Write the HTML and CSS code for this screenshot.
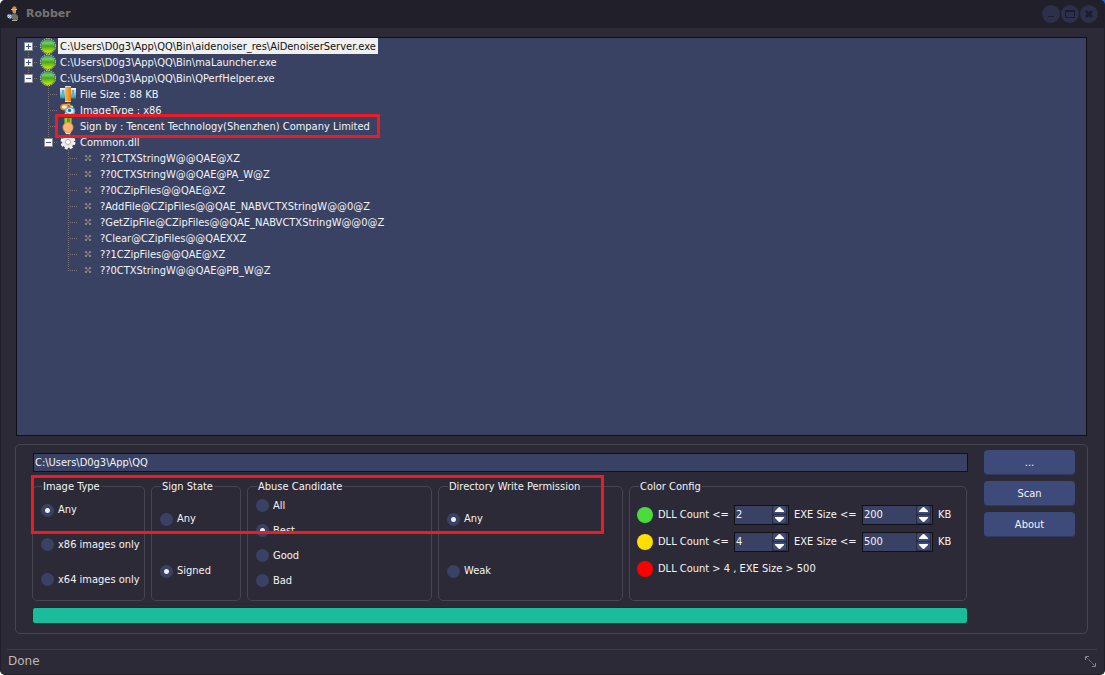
FILE: index.html
```html
<!DOCTYPE html>
<html lang="en">
<head>
<meta charset="utf-8">
<title>Robber</title>
<link rel="stylesheet" href="styles.css">
</head>
<body>
<svg class="defs" aria-hidden="true">
  <defs>
    <linearGradient id="ball" x1="0" y1="0" x2="0" y2="1"><stop offset="0" stop-color="#2f9a2a"/><stop offset=".3" stop-color="#7cc873"/><stop offset=".5" stop-color="#44a41c"/><stop offset="1" stop-color="#d8f000"/></linearGradient>
    <linearGradient id="steel" x1="0" y1="0" x2="0" y2="1"><stop offset="0" stop-color="#e9f7fa"/><stop offset=".5" stop-color="#8fc6d6"/><stop offset="1" stop-color="#2f7f96"/></linearGradient>
    <linearGradient id="orange" x1="0" y1="0" x2="1" y2="0"><stop offset="0" stop-color="#ffb649"/><stop offset="1" stop-color="#e87f0c"/></linearGradient>
    <symbol id="i-ball" viewBox="0 0 16 16"><circle cx="8" cy="8" r="7.500" fill="#1d4a22"/><circle cx="8" cy="8" r="7" fill="url(#ball)"/><circle cx="8" cy="8" r="7.600" fill="none" stroke="#fff" stroke-width=".8" stroke-dasharray="1.400 1"/></symbol>
    <symbol id="i-plus" viewBox="0 0 9 9"><path d="M.5.5h8v8h-8z" fill="#fbfbfb" stroke="#8d8d8d"/><path d="M2 4.500h5M4.500 2v5" stroke="#3b55a8"/></symbol>
    <symbol id="i-minus" viewBox="0 0 9 9"><path d="M.5.5h8v8h-8z" fill="#fbfbfb" stroke="#8d8d8d"/><path d="M2 4.500h5" stroke="#3b55a8"/></symbol>
    <symbol id="i-size" viewBox="0 0 16 16"><path d="M0 2h16v11H0z" fill="url(#steel)"/><path d="M0 2.500h16" stroke="#eefcff"/><path d="M0 12.500h16" stroke="#2d7184"/><path d="M2 4h2v7H2zM12 4h2v7h-2z" fill="#5fb0c6"/><path d="M5 1h6v14H5z" fill="url(#orange)"/><path d="M5 .5h6M5 15.500h6" stroke="#c5e5ec"/></symbol>
    <symbol id="i-type" viewBox="0 0 16 16"><ellipse cx="4.500" cy="5" rx="3.500" ry="2.500" fill="#fff1d8" stroke="#e98a20" stroke-width="1.700"/><path d="M5 3l4-1 2 3" fill="none" stroke="#f6a53b" stroke-width="1.500"/><ellipse cx="10" cy="9" rx="4.500" ry="3.500" fill="#e8f7fa" stroke="#63b1c9" stroke-width="1.700"/><circle cx="9.500" cy="8.500" r="1.700" fill="#286e91"/><path d="M11 4l2 1M5 11l2 2M13 12l2 1" stroke="#b7e1eb" stroke-width="1.500"/></symbol>
    <symbol id="i-medal" viewBox="0 0 16 16"><path d="M4 0h8v6H4z" fill="#5d9f18"/><path d="M5 0h2v5H5zM10 0h1v5h-1z" fill="#95cd49"/><path d="M4 12h8l-2 4H6z" fill="#fff0d6"/><circle cx="8" cy="9.500" r="5" fill="#ffb673" stroke="#ed9448"/></symbol>
    <symbol id="i-gear" viewBox="0 0 16 16"><circle cx="8" cy="8" r="6" fill="#e8e8e8"/><circle cx="8" cy="8" r="6.200" fill="none" stroke="#f5f5f5" stroke-width="2.500" stroke-dasharray="2.900 1.970"/><circle cx="8" cy="8" r="2.500" fill="#fff" stroke="#b2b2b2"/></symbol>
    <symbol id="i-fn" viewBox="0 0 8 8"><path d="M1 1h2v1h2V1h2v2H6v2h1v2H5V6H3v1H1V5h1V3H1z" fill="#85837a"/><path d="M3 2h2v1h1v2H5v1H3V5H2V3h1z" fill="#55555a"/><path d="M3 3h2v2H3z" fill="#6d6c69"/></symbol>
    <symbol id="i-up" viewBox="0 0 13 8"><path d="M6 1h1l4 4v1H2V5z" fill="#fff"/></symbol>
    <symbol id="i-down" viewBox="0 0 13 8"><path d="M2 2h9v1L7 7H6L2 3z" fill="#fff"/></symbol>
  </defs>
</svg>
<div class="window">
  <header class="titlebar">
    <svg class="app-icon" viewBox="0 0 16 16" aria-hidden="true"><path d="M6 2l2-2 2 1 1 3H6z" fill="#d98b25"/><path d="M5 3h6v1H5z" fill="#f5b24b"/><path d="M6 4h4v3H7z" fill="#b39a80"/><path d="M6 8l3-1 3 3v4l-3 1-3-2z" fill="#706e69"/><path d="M6 14h5v1H6z" fill="#aaa698"/><path d="M1 9l2-1 3 1v3l-2 1-3-2z" fill="#7f9dbd"/><path d="M2 9l3 3M5 9l-3 3" stroke="#c9dcec"/></svg>
    <h1 class="title">Robber</h1>
    <div class="controls">
      <button class="control" aria-label="Minimize"><svg viewBox="0 0 18 18"><path d="M6 11.500h6"/></svg></button>
      <button class="control" aria-label="Maximize"><svg viewBox="0 0 18 18"><path d="M4.500 5.500h9v7h-9zM4 6.500h10"/></svg></button>
      <button class="control" aria-label="Close"><svg viewBox="0 0 18 18"><path d="M6 6l6 6M12 6l-6 6" stroke-width="3"/></svg></button>
    </div>
  </header>

  <main class="content">
    <ul class="tree">
      <li class="node"><span class="cell line first"><svg class="toggle"><use href="#i-plus"/></svg></span><span class="cell"><svg class="icon"><use href="#i-ball"/></svg></span><span class="text selected">C:\Users\D0g3\App\QQ\Bin\aidenoiser_res\AiDenoiserServer.exe</span></li>
      <li class="node"><span class="cell line"><svg class="toggle"><use href="#i-plus"/></svg></span><span class="cell"><svg class="icon"><use href="#i-ball"/></svg></span><span class="text">C:\Users\D0g3\App\QQ\Bin\maLauncher.exe</span></li>
      <li class="node"><span class="cell line last"><svg class="toggle"><use href="#i-minus"/></svg></span><span class="cell"><svg class="icon"><use href="#i-ball"/></svg></span><span class="text">C:\Users\D0g3\App\QQ\Bin\QPerfHelper.exe</span></li>
      <li class="node level-1"><span class="cell line"></span><span class="cell"><svg class="icon"><use href="#i-size"/></svg></span><span class="text">File Size : 88 KB</span></li>
      <li class="node level-1"><span class="cell line"></span><span class="cell"><svg class="icon"><use href="#i-type"/></svg></span><span class="text">ImageType : x86</span></li>
      <li class="node level-1 signed"><span class="cell line"></span><span class="cell"><svg class="icon"><use href="#i-medal"/></svg></span><span class="text">Sign by : Tencent Technology(Shenzhen) Company Limited</span><span class="mark mark-sign"></span></li>
      <li class="node level-1"><span class="cell line last"><svg class="toggle"><use href="#i-minus"/></svg></span><span class="cell"><svg class="icon"><use href="#i-gear"/></svg></span><span class="text">Common.dll</span></li>
      <li class="node level-2"><span class="cell line"></span><span class="cell"><svg class="bullet"><use href="#i-fn"/></svg></span><span class="text">??1CTXStringW@@QAE@XZ</span></li>
      <li class="node level-2"><span class="cell line"></span><span class="cell"><svg class="bullet"><use href="#i-fn"/></svg></span><span class="text">??0CTXStringW@@QAE@PA_W@Z</span></li>
      <li class="node level-2"><span class="cell line"></span><span class="cell"><svg class="bullet"><use href="#i-fn"/></svg></span><span class="text">??0CZipFiles@@QAE@XZ</span></li>
      <li class="node level-2"><span class="cell line"></span><span class="cell"><svg class="bullet"><use href="#i-fn"/></svg></span><span class="text">?AddFile@CZipFiles@@QAE_NABVCTXStringW@@0@Z</span></li>
      <li class="node level-2"><span class="cell line"></span><span class="cell"><svg class="bullet"><use href="#i-fn"/></svg></span><span class="text">?GetZipFile@CZipFiles@@QAE_NABVCTXStringW@@0@Z</span></li>
      <li class="node level-2"><span class="cell line"></span><span class="cell"><svg class="bullet"><use href="#i-fn"/></svg></span><span class="text">?Clear@CZipFiles@@QAEXXZ</span></li>
      <li class="node level-2"><span class="cell line"></span><span class="cell"><svg class="bullet"><use href="#i-fn"/></svg></span><span class="text">??1CZipFiles@@QAE@XZ</span></li>
      <li class="node level-2"><span class="cell line last"></span><span class="cell"><svg class="bullet"><use href="#i-fn"/></svg></span><span class="text">??0CTXStringW@@QAE@PB_W@Z</span></li>
    </ul>

    <section class="panel">
      <div class="options">
        <input class="path" type="text" aria-label="Scan path" value="C:\Users\D0g3\App\QQ">
        <div class="groups">
          <fieldset class="group">
            <legend>Image Type</legend>
            <div class="choices">
              <label><input type="radio" name="image" checked>Any</label>
              <label><input type="radio" name="image">x86 images only</label>
              <label><input type="radio" name="image">x64 images only</label>
            </div>
          </fieldset>
          <fieldset class="group">
            <legend>Sign State</legend>
            <div class="choices">
              <label><input type="radio" name="sign">Any</label>
              <label><input type="radio" name="sign" checked>Signed</label>
            </div>
          </fieldset>
          <fieldset class="group">
            <legend>Abuse Candidate</legend>
            <div class="choices dense">
              <label><input type="radio" name="abuse">All</label>
              <label><input type="radio" name="abuse" checked>Best</label>
              <label><input type="radio" name="abuse">Good</label>
              <label><input type="radio" name="abuse">Bad</label>
            </div>
          </fieldset>
          <fieldset class="group">
            <legend>Directory Write Permission</legend>
            <div class="choices">
              <label><input type="radio" name="write" checked>Any</label>
              <label><input type="radio" name="write">Weak</label>
            </div>
          </fieldset>
          <fieldset class="group">
            <legend>Color Config</legend>
            <div class="colors">
              <span class="dot green"></span><label for="dll1">DLL Count &lt;=</label>
              <span class="spin"><input id="dll1" type="text" value="2"><span class="steps"><button aria-label="Increase"><svg><use href="#i-up"/></svg></button><button aria-label="Decrease"><svg><use href="#i-down"/></svg></button></span></span>
              <label for="exe1">EXE Size &lt;=</label>
              <span class="spin"><input id="exe1" type="text" value="200"><span class="steps"><button aria-label="Increase"><svg><use href="#i-up"/></svg></button><button aria-label="Decrease"><svg><use href="#i-down"/></svg></button></span></span>
              <span>KB</span>
              <span class="dot yellow"></span><label for="dll2">DLL Count &lt;=</label>
              <span class="spin"><input id="dll2" type="text" value="4"><span class="steps"><button aria-label="Increase"><svg><use href="#i-up"/></svg></button><button aria-label="Decrease"><svg><use href="#i-down"/></svg></button></span></span>
              <label for="exe2">EXE Size &lt;=</label>
              <span class="spin"><input id="exe2" type="text" value="500"><span class="steps"><button aria-label="Increase"><svg><use href="#i-up"/></svg></button><button aria-label="Decrease"><svg><use href="#i-down"/></svg></button></span></span>
              <span>KB</span>
              <span class="dot red"></span><span class="rest">DLL Count &gt; 4 , EXE Size &gt; 500</span>
            </div>
          </fieldset>
          <span class="mark mark-groups"></span>
        </div>
        <div class="progress" role="progressbar" aria-label="Scan progress" aria-valuenow="100"></div>
      </div>
      <div class="actions">
        <button class="action">...</button>
        <button class="action">Scan</button>
        <button class="action">About</button>
      </div>
    </section>
  </main>

  <footer class="status">
    <span>Done</span>
    <svg class="grip" viewBox="0 0 11 11" aria-hidden="true"><path d="M1 1l9 9" stroke-dasharray="1.400 .6"/><path d="M.5 4V.5H4M7 10.500h3.500V7"/></svg>
  </footer>
</div>
</body>
</html>
```

FILE: styles.css
```css
* { box-sizing: border-box; }

body {
  margin: 0;
  background: linear-gradient(#1769d8, #1769d8) right top / 6px 6px no-repeat #fff;
  color: #f4f4f4;
  font: 11px/14px "DejaVu Sans Condensed", "Noto Sans", sans-serif;
}

button, input { font: inherit; color: inherit; border: 0; padding: 0; margin: 0; }
.defs { position: absolute; width: 0; height: 0; }
svg { display: block; }

.window {
  min-height: 100vh;
  display: flex;
  flex-direction: column;
  background: #2d2a37;
  border: 1px solid #211f2a;
  border-top: 0;
  border-radius: 5px;
  overflow: hidden;
}

.titlebar {
  height: 28px;
  display: flex;
  align-items: center;
  padding: 0 6px 0 5px;
  background: #211f2a;
}
.app-icon { width: 16px; height: 16px; }
.title {
  flex: 1;
  margin: 0 0 0 4px;
  color: #757371;
  font: bold 11px/14px "DejaVu Sans", sans-serif;
}
.controls { display: flex; gap: 1px; }
.control { width: 18px; height: 18px; border-radius: 50%; background: #2d304a; }
.control svg { width: 18px; height: 18px; fill: none; stroke: #1d1c29; }

.content {
  flex: 1;
  display: flex;
  flex-direction: column;
  gap: 8px;
  padding: 9px 16px 15px 14px;
}

.tree {
  flex: 1;
  margin: 0 1px;
  padding: 0 0 0 1px;
  list-style: none;
  background: #3a4264;
  border: 1px solid #101017;
}
.node { display: flex; height: 16px; line-height: 18px; white-space: nowrap; }
.level-1 { padding-left: 20px; }
.level-2 { padding-left: 40px; }
.cell { width: 20px; display: flex; align-items: center; justify-content: center; }
.line {
  background:
    repeating-linear-gradient(to bottom, #77747a 0 1px, transparent 1px 2px) 10px 0 / 1px 100% no-repeat,
    repeating-linear-gradient(to right, #77747a 0 1px, transparent 1px 2px) 10px 8px / 10px 1px no-repeat;
}
.first { background-position: 10px 8px, 10px 8px; }
.last { background-size: 1px 8px, 10px 1px; }
.toggle { width: 9px; height: 9px; }
.icon { width: 16px; height: 16px; }
.bullet { width: 8px; height: 8px; }
.text { padding: 0 2px; }
.selected { background: #f0f0f0; color: #111; }

.mark { position: absolute; border: 3px solid #ed1c24; pointer-events: none; }
.signed { position: relative; }
.mark-sign { left: 37px; top: -4px; width: 325px; height: 24px; }
.mark-groups { left: -1px; top: -4px; width: 61.3%; height: 59px; }

.panel {
  display: flex;
  gap: 16px;
  padding: 5px 12px 9px 16px;
  border: 1px solid #474552;
  border-radius: 5px;
}
.options { flex: 1; min-width: 0; display: flex; flex-direction: column; padding-top: 3px; }
.path {
  height: 19px;
  margin: 0 0 7px 1px;
  padding: 0 1px;
  background: #394264;
  border: 1px solid #101017;
}
.groups {
  position: relative;
  display: grid;
  grid-template-columns: 113fr 90fr 185fr 185fr 338fr;
  gap: 6px;
  margin-right: 1px;
}
.group {
  min-width: 0;
  margin: 0;
  padding: 0 8px 3px;
  border: 1px solid #474552;
  border-radius: 5px;
}
.group legend { height: 14px; margin-left: 1px; padding: 0 1px; line-height: 16px; white-space: nowrap; }
.choices { height: 104px; display: grid; grid-auto-rows: 1fr; align-items: center; }
.choices.dense { padding-bottom: 4px; }
.choices label { display: flex; align-items: center; gap: 4px; white-space: nowrap; }
.choices input {
  appearance: none;
  width: 13px;
  height: 13px;
  border-radius: 50%;
  background: #394264;
}
.choices input:checked { background: radial-gradient(circle, #eee 0 2px, #394264 3px); }

.colors {
  display: grid;
  grid-template-columns: 16px 71px 55px 63px 71px auto;
  grid-auto-rows: 27px;
  column-gap: 5px;
  align-items: center;
  padding-top: 8px;
  margin-left: -1px;
  white-space: nowrap;
}
.rest { grid-column: span 5; }
.dot { width: 16px; height: 16px; border-radius: 50%; }
.green { background: #4cdb3f; }
.yellow { background: #ffde00; }
.red { background: #f00; }
.spin {
  display: flex;
  height: 20px;
  padding-right: 1px;
  background: #394264;
  border: 1px solid #101017;
}
.spin input { flex: 1; min-width: 0; padding: 0 1px; background: none; }
.steps { display: flex; flex-direction: column; gap: 1px; padding: 0 1px; background: #2b2c40; }
.steps button { width: 13px; height: 8px; background: #3d4a7a; border-radius: 2px; }
.steps svg { width: 13px; height: 8px; }

.progress {
  height: 17px;
  margin: 6px 0 0;
  background: #1abc9c;
  border: 1px solid #17302f;
  border-radius: 3px;
}
.actions { width: 91px; display: flex; flex-direction: column; gap: 6px; }
.action {
  height: 25px;
  padding-top: 2px;
  background: #3d4a7a;
  border-bottom: 1px solid #303a60;
  border-radius: 4px;
}

.status {
  display: flex;
  align-items: center;
  justify-content: space-between;
  height: 25px;
  margin: 0 7px 0 6px;
  padding: 0 1px 2px;
  border-top: 1px solid #3f3c49;
  color: #bbb8b7;
  font: 12px/16px "DejaVu Sans", sans-serif;
}
.grip { width: 11px; height: 11px; fill: none; stroke: #85838a; }
```
